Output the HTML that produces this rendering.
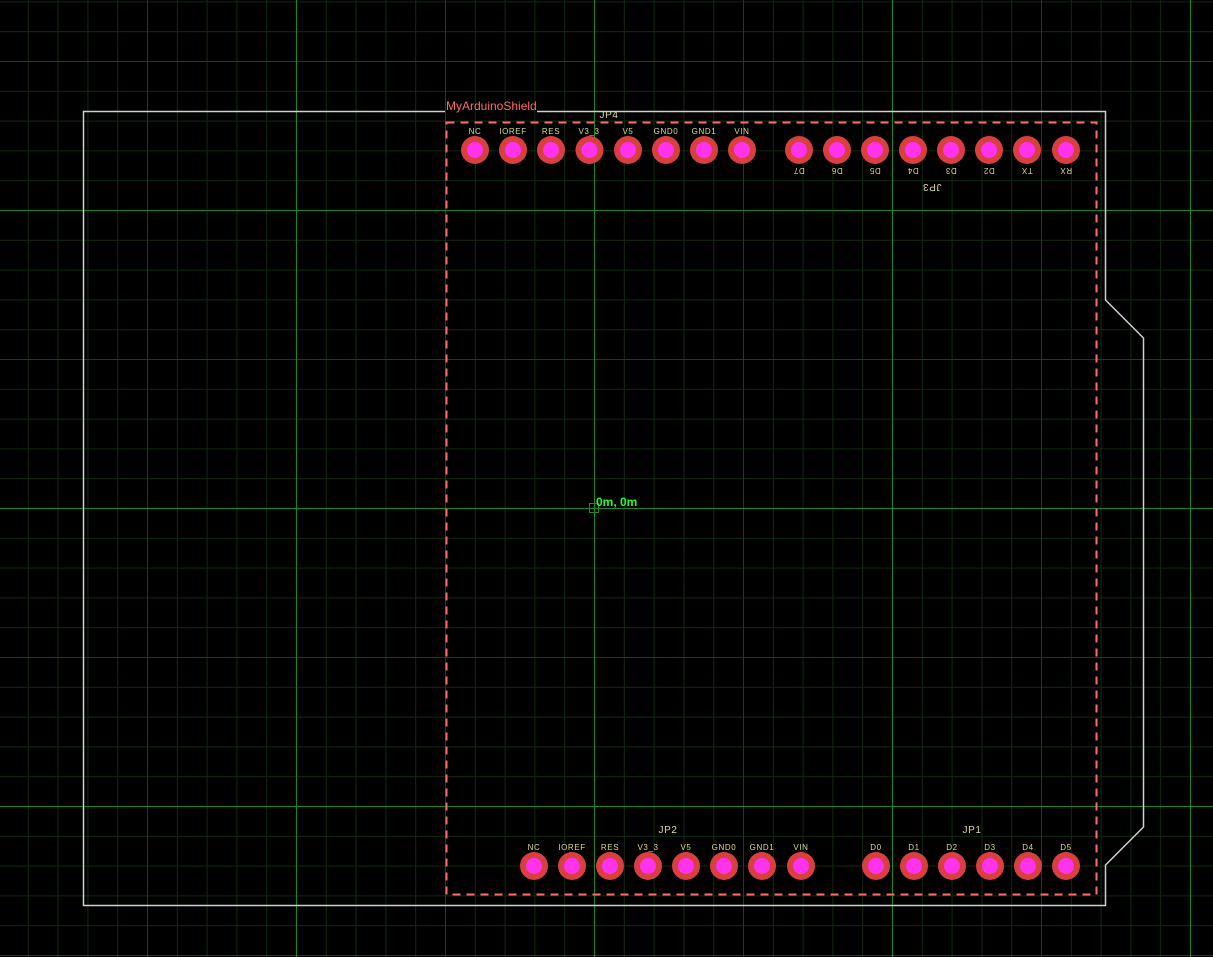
<!DOCTYPE html>
<html><head><meta charset="utf-8"><style>
html,body{margin:0;padding:0;background:#000;width:1213px;height:957px;overflow:hidden}
svg{display:block}
text{font-family:"Liberation Sans",sans-serif}
</style></head><body>
<svg width="1213" height="957" viewBox="0 0 1213 957" xmlns="http://www.w3.org/2000/svg">
<defs>
<pattern id="mi" x="27.8" y="1.4" width="29.8" height="29.8" patternUnits="userSpaceOnUse">
<path d="M0.5 0V29.8M0 0.5H29.8" stroke="#112a11" stroke-width="1" fill="none"/>
</pattern>
<pattern id="me" x="147" y="61" width="149" height="149" patternUnits="userSpaceOnUse">
<path d="M0.5 0V149M0 0.5H149" stroke="#1b3f1b" stroke-width="1" fill="none"/>
</pattern>
<pattern id="ma" x="296" y="210" width="298" height="298" patternUnits="userSpaceOnUse">
<path d="M0.5 0V298M0 0.5H298" stroke="#1a881a" stroke-width="1" fill="none"/>
</pattern>
</defs>
<rect width="1213" height="957" fill="#000"/>
<rect width="1213" height="957" fill="url(#mi)"/>
<rect width="1213" height="957" fill="url(#me)"/>
<rect width="1213" height="957" fill="url(#ma)"/>

<path d="M445 111.5H83.5V905.5H1105.5V865L1143.5 827V338L1105.5 300V111.5H537" stroke="#d0d0d0" stroke-width="1.5" fill="none"/>
<text x="446" y="110" fill="#ff6b6b" font-size="12">MyArduinoShield</text>

<rect x="446.5" y="122.5" width="650" height="772" fill="none" stroke="#ff6b6b" stroke-width="2" stroke-dasharray="8,6"/>

<g fill="#d9d98e" font-size="8" text-anchor="middle" letter-spacing="0.6">
<text x="609" y="118" font-size="10">JP4</text>
<text x="668" y="833" font-size="10">JP2</text>
<text x="972" y="833" font-size="10">JP1</text>
<text x="475" y="134">NC</text><text x="513" y="134">IOREF</text><text x="551" y="134">RES</text><text x="589" y="134">V3_3</text><text x="628" y="134">V5</text><text x="666" y="134">GND0</text><text x="704" y="134">GND1</text><text x="742" y="134">VIN</text>
<text x="534" y="850">NC</text><text x="572" y="850">IOREF</text><text x="610" y="850">RES</text><text x="648" y="850">V3_3</text><text x="686" y="850">V5</text><text x="724" y="850">GND0</text><text x="762" y="850">GND1</text><text x="801" y="850">VIN</text>
<text x="876" y="850">D0</text><text x="914" y="850">D1</text><text x="952" y="850">D2</text><text x="990" y="850">D3</text><text x="1028" y="850">D4</text><text x="1066" y="850">D5</text>
<text transform="rotate(180 932 184)" x="932" y="184" font-size="10">JP3</text>
<text transform="rotate(180 799 168)" x="799" y="168">D7</text>
<text transform="rotate(180 837 168)" x="837" y="168">D6</text>
<text transform="rotate(180 875 168)" x="875" y="168">D5</text>
<text transform="rotate(180 913 168)" x="913" y="168">D4</text>
<text transform="rotate(180 951 168)" x="951" y="168">D3</text>
<text transform="rotate(180 989 168)" x="989" y="168">D2</text>
<text transform="rotate(180 1027 168)" x="1027" y="168">TX</text>
<text transform="rotate(180 1066 168)" x="1066" y="168">RX</text>
</g>

<g fill="#d93f3f">
<circle cx="475" cy="150" r="14"/><circle cx="513" cy="150" r="14"/><circle cx="551" cy="150" r="14"/><circle cx="589.5" cy="150" r="14"/><circle cx="628" cy="150" r="14"/><circle cx="666" cy="150" r="14"/><circle cx="704" cy="150" r="14"/><circle cx="742" cy="150" r="14"/>
<circle cx="799" cy="150" r="14"/><circle cx="837" cy="150" r="14"/><circle cx="875" cy="150" r="14"/><circle cx="913" cy="150" r="14"/><circle cx="951" cy="150" r="14"/><circle cx="989" cy="150" r="14"/><circle cx="1027" cy="150" r="14"/><circle cx="1066" cy="150" r="14"/>
<circle cx="534" cy="866" r="14"/><circle cx="572" cy="866" r="14"/><circle cx="610" cy="866" r="14"/><circle cx="648" cy="866" r="14"/><circle cx="686" cy="866" r="14"/><circle cx="724" cy="866" r="14"/><circle cx="762" cy="866" r="14"/><circle cx="801" cy="866" r="14"/>
<circle cx="876" cy="866" r="14"/><circle cx="914" cy="866" r="14"/><circle cx="952" cy="866" r="14"/><circle cx="990" cy="866" r="14"/><circle cx="1028" cy="866" r="14"/><circle cx="1066" cy="866" r="14"/>
</g>
<g fill="#ff33ee">
<circle cx="475" cy="150" r="8"/><circle cx="513" cy="150" r="8"/><circle cx="551" cy="150" r="8"/><circle cx="589.5" cy="150" r="8"/><circle cx="628" cy="150" r="8"/><circle cx="666" cy="150" r="8"/><circle cx="704" cy="150" r="8"/><circle cx="742" cy="150" r="8"/>
<circle cx="799" cy="150" r="8"/><circle cx="837" cy="150" r="8"/><circle cx="875" cy="150" r="8"/><circle cx="913" cy="150" r="8"/><circle cx="951" cy="150" r="8"/><circle cx="989" cy="150" r="8"/><circle cx="1027" cy="150" r="8"/><circle cx="1066" cy="150" r="8"/>
<circle cx="534" cy="866" r="8"/><circle cx="572" cy="866" r="8"/><circle cx="610" cy="866" r="8"/><circle cx="648" cy="866" r="8"/><circle cx="686" cy="866" r="8"/><circle cx="724" cy="866" r="8"/><circle cx="762" cy="866" r="8"/><circle cx="801" cy="866" r="8"/>
<circle cx="876" cy="866" r="8"/><circle cx="914" cy="866" r="8"/><circle cx="952" cy="866" r="8"/><circle cx="990" cy="866" r="8"/><circle cx="1028" cy="866" r="8"/><circle cx="1066" cy="866" r="8"/>
</g>

<rect x="589.5" y="503.5" width="9" height="9" fill="none" stroke="#1c8c1c" stroke-width="1"/>
<text x="596" y="506" fill="#22ff22" font-size="12" font-weight="bold">0m, 0m</text>
</svg>
</body></html>
